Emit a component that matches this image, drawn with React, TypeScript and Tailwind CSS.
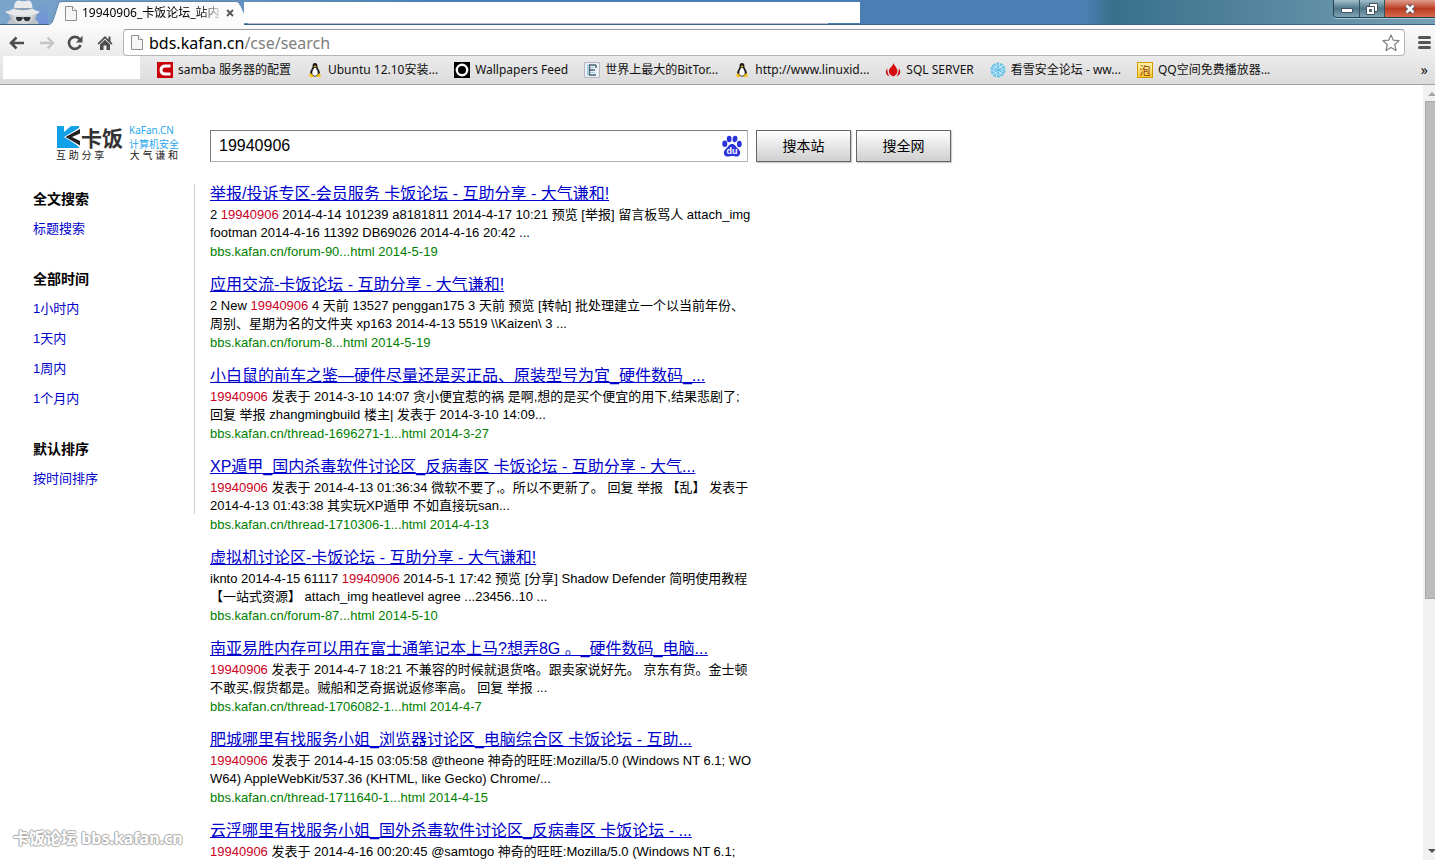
import React, { useState } from 'react';

const KEYWORD = '19940906';

const results = [
  {
    title: '举报/投诉专区-会员服务 卡饭论坛 - 互助分享 - 大气谦和!',
    lines: [
      '2 19940906 2014-4-14 101239 a8181811 2014-4-17 10:21 预览 [举报] 留言板骂人 attach_img',
      'footman 2014-4-16 11392 DB69026 2014-4-16 20:42 ...',
    ],
    url: 'bbs.kafan.cn/forum-90...html 2014-5-19',
  },
  {
    title: '应用交流-卡饭论坛 - 互助分享 - 大气谦和!',
    lines: [
      '2 New 19940906 4 天前 13527 penggan175 3 天前 预览 [转帖] 批处理建立一个以当前年份、',
      '周别、星期为名的文件夹 xp163 2014-4-13 5519 \\\\Kaizen\\ 3 ...',
    ],
    url: 'bbs.kafan.cn/forum-8...html 2014-5-19',
  },
  {
    title: '小白鼠的前车之鉴—硬件尽量还是买正品、原装型号为宜_硬件数码_...',
    lines: [
      '19940906 发表于 2014-3-10 14:07 贪小便宜惹的祸 是啊,想的是买个便宜的用下,结果悲剧了;',
      '回复 举报 zhangmingbuild 楼主| 发表于 2014-3-10 14:09...',
    ],
    url: 'bbs.kafan.cn/thread-1696271-1...html 2014-3-27',
  },
  {
    title: 'XP遁甲_国内杀毒软件讨论区_反病毒区 卡饭论坛 - 互助分享 - 大气...',
    lines: [
      '19940906 发表于 2014-4-13 01:36:34 微软不要了,。所以不更新了。 回复 举报 【乱】 发表于',
      '2014-4-13 01:43:38 其实玩XP遁甲 不如直接玩san...',
    ],
    url: 'bbs.kafan.cn/thread-1710306-1...html 2014-4-13',
  },
  {
    title: '虚拟机讨论区-卡饭论坛 - 互助分享 - 大气谦和!',
    lines: [
      'iknto 2014-4-15 61117 19940906 2014-5-1 17:42 预览 [分享] Shadow Defender 简明使用教程',
      '【一站式资源】 attach_img heatlevel agree ...23456..10 ...',
    ],
    url: 'bbs.kafan.cn/forum-87...html 2014-5-10',
  },
  {
    title: '南亚易胜内存可以用在富士通笔记本上马?想弄8G 。_硬件数码_电脑...',
    lines: [
      '19940906 发表于 2014-4-7 18:21 不兼容的时候就退货咯。跟卖家说好先。 京东有货。金士顿',
      '不敢买,假货都是。贼船和芝奇据说返修率高。 回复 举报 ...',
    ],
    url: 'bbs.kafan.cn/thread-1706082-1...html 2014-4-7',
  },
  {
    title: '肥城哪里有找服务小姐_浏览器讨论区_电脑综合区 卡饭论坛 - 互助...',
    lines: [
      '19940906 发表于 2014-4-15 03:05:58 @theone 神奇的旺旺:Mozilla/5.0 (Windows NT 6.1; WO',
      'W64) AppleWebKit/537.36 (KHTML, like Gecko) Chrome/...',
    ],
    url: 'bbs.kafan.cn/thread-1711640-1...html 2014-4-15',
  },
  {
    title: '云浮哪里有找服务小姐_国外杀毒软件讨论区_反病毒区 卡饭论坛 - ...',
    lines: ['19940906 发表于 2014-4-16 00:20:45 @samtogo 神奇的旺旺:Mozilla/5.0 (Windows NT 6.1;'],
    url: '',
  },
];

const filters = [
  { current: '全文搜索', options: ['标题搜索'] },
  { current: '全部时间', options: ['1小时内', '1天内', '1周内', '1个月内'] },
  { current: '默认排序', options: ['按时间排序'] },
];

function PageIcon() {
  return (
    <svg viewBox="0 0 12 15" className="h-[15px] w-3 shrink-0" aria-hidden="true">
      <path d="M.5.5h7l4 4v10H.5z" fill="#f6f6f6" stroke="#8e8e8e" />
      <path d="M7.5.5v4h4" fill="#fff" stroke="#8e8e8e" />
    </svg>
  );
}

function TuxIcon() {
  return (
    <svg viewBox="0 0 16 16" className="size-4 shrink-0" aria-hidden="true">
      <path d="M8 1C6 1 5.4 2.4 5.6 4.4 5.6 6 3.4 8 3 11c0 2 2 3.600 5 3.600s5-1.600 5-3.600c-.4-3-2.600-5-2.600-6.600C10.600 2.400 10 1 8 1z" fill="#1c1c1c" />
      <path d="M8 5.500C6.500 6.500 5.200 9 5.200 11c0 1.800 1.200 2.700 2.800 2.700s2.800-.9 2.800-2.700c0-2-1.300-4.500-2.800-5.500z" fill="#fff" />
      <path d="M6.500 4.200 8 3.600l1.500.6L8 5.600z" fill="#f0b400" />
      <path d="M3.600 11 1.800 13.800l3 1.700 2-1.300zM12.400 11l1.800 2.800-3 1.700-2-1.300z" fill="#f5c211" />
    </svg>
  );
}

const bookmarks = [
  {
    label: 'samba 服务器的配置',
    icon: (
      <svg viewBox="0 0 16 16" className="size-4 shrink-0" aria-hidden="true">
        <path d="M0 0h16v16H0z" fill="#c8000a" />
        <path d="M13.500 4H8.500Q4 4 4 8t4.500 4h5" fill="none" stroke="#fff" strokeWidth="3" />
      </svg>
    ),
  },
  { label: 'Ubuntu 12.10安装...', icon: <TuxIcon /> },
  {
    label: 'Wallpapers Feed',
    icon: (
      <svg viewBox="0 0 16 16" className="size-4 shrink-0" aria-hidden="true">
        <path d="M0 0h16v16H0z" fill="#000" />
        <circle cx="8" cy="8" r="5.200" fill="none" stroke="#fff" strokeWidth="2.400" />
      </svg>
    ),
  },
  {
    label: '世界上最大的BitTor...',
    icon: (
      <svg viewBox="0 0 16 16" className="size-4 shrink-0" aria-hidden="true">
        <path d="M.5.5h15v15H.5z" fill="#eef0f5" stroke="#b4b6c4" />
        <path d="M12 3H5.500v10H12M12 3v3M5.500 8H11" fill="none" stroke="#4c6272" strokeWidth="1.500" />
        <path d="M3.500 2.500v11" stroke="#8fd0f2" />
        <path d="M7 5.500h3M7 10.500h4" stroke="#8fd0f2" />
      </svg>
    ),
  },
  { label: 'http://www.linuxid...', icon: <TuxIcon /> },
  {
    label: 'SQL SERVER',
    icon: (
      <svg viewBox="0 0 16 16" className="size-4 shrink-0" aria-hidden="true">
        <path d="M8.500 1c.6 2.600 4 4.800 4 8.300 0 2.600-2 4.200-4.200 5.200C6 13.500 3.800 12 3.800 9.300 3.800 6 8 4.500 8.500 1z" fill="#d40f12" />
        <path d="M2.300 6.500C.2 9 0 12.500 4.500 14.300 2.800 12 2.300 9.500 2.300 6.500zM13.800 6.500c2.200 2.500 2.400 6-2.100 7.800 1.600-2.300 2.100-4.800 2.100-7.800z" fill="#c40d10" />
      </svg>
    ),
  },
  {
    label: '看雪安全论坛 - ww...',
    icon: (
      <svg viewBox="0 0 16 16" className="size-4 shrink-0" aria-hidden="true">
        <circle cx="8" cy="8" r="6.500" fill="#c9ebf8" stroke="#6cc4e8" strokeWidth="2" strokeDasharray="3 1" />
        <path d="M8 1v14M2 4.500l12 7M14 4.500l-12 7M5 3l3 2.500L11 3M5 13l3-2.500 3 2.500M2 8h12" fill="none" stroke="#5ab9e2" />
      </svg>
    ),
  },
  {
    label: 'QQ空间免费播放器...',
    icon: (
      <span className="flex size-4 shrink-0 items-center justify-center border border-[#d29a00] bg-linear-to-b from-[#fff3a8] to-[#ffc82e] text-[11px] leading-none text-[#8a3d00]">
        泡
      </span>
    ),
  },
];

function Incognito() {
  return (
    <svg viewBox="0 0 40 24" className="h-6 w-10 shrink-0" aria-hidden="true">
      <path d="M4 24c1-2.500 2.500-4 4-5l-2-4 5-3h18l5 3-2 4c1.500 1 3 2.500 4 5z" fill="#bcc1c7" />
      <path d="M9 12h22l-1 6c-1 4-5 6-10 6s-9-2-10-6z" fill="#d2d5d8" />
      <path d="M11 8c0-4.500 2-7.500 4.500-7.500 1.500 0 2.500.8 5 .8S24 .5 25.500.5C28 .5 29.500 4 29.500 8z" fill="#e8eaec" />
      <path d="M11 7.500c5 2 14 2 18.500 0l.5 3H10.500z" fill="#9a9fa4" />
      <path d="M2 11.500c3 0 6.500-2 9-3 3 2.200 15 2.200 18 0 2.500 1 5.500 3 8 3-2 3-9 4.300-17 4.300S4 14.500 2 11.500z" fill="#e6e8ea" />
      <path d="M13 17h6l1 .8 1-.8h6.500c0 3-1.400 4.300-3.300 4.300-2 0-3.200-1-3.600-2.800h-1.200c-.4 1.800-1.500 2.800-3.400 2.800-1.900 0-3-1.300-3-4.300z" fill="#2d3236" />
    </svg>
  );
}

function TabStrip() {
  return (
    <header className="relative flex h-[25px] items-end border-b border-[#3b6285] bg-linear-to-r from-[#7ba5cc] via-[#4b7fb3] via-30% to-[#4b7fb3]">
      <div className="absolute inset-y-0 right-0 w-[350px] bg-linear-to-r from-[#4b7fb3] via-[#37708a] via-8% to-[#76a0b4]" />
      <div className="relative flex w-12 bg-linear-to-br from-transparent from-50% to-[#6f8fdc] pl-[3px]">
        <Incognito />
      </div>
      <div className="relative -mb-px flex h-6 w-[196px] shrink-0 items-center">
        <svg viewBox="0 0 196 24" preserveAspectRatio="none" className="absolute inset-0 size-full" aria-hidden="true">
          <path d="M0 24C4 23 5 20 6.500 15L10 4c1-3 2-3.500 5-3.500h172c3 0 4 .5 5 3.500l4 9v11z" fill="#fbfbfb" />
          <path d="M0 24C4 23 5 20 6.500 15L10 4c1-3 2-3.500 5-3.500h172c3 0 4 .5 5 3.500" fill="none" stroke="#5f84a8" />
        </svg>
        <div className="relative flex w-full items-center pl-[17px] pr-2">
          <PageIcon />
          <span className="ml-[5px] w-[139px] overflow-hidden bg-linear-to-r from-black from-85% to-black/20 bg-clip-text text-xs whitespace-nowrap text-transparent">
            19940906_卡饭论坛_站内
          </span>
          <button type="button" aria-label="关闭标签页" className="ml-1 flex size-3 items-center justify-center">
            <svg viewBox="0 0 8 8" className="size-2" aria-hidden="true">
              <path d="M1 1l6 6M7 1l-6 6" stroke="#555" strokeWidth="1.800" />
            </svg>
          </button>
        </div>
      </div>
      <div className="relative mr-4 h-6 w-[616px] shrink-0 pt-0.5">
        <div className="h-[21px] bg-white" />
        <div className="ml-1 h-px w-[580px] bg-[#b6bdd0]" />
      </div>
      <div className="absolute top-0 right-0 flex h-[18px] w-[102px] overflow-hidden rounded-bl border-b border-l border-[#24414f] shadow-[0_1px_0_#a9c6d2]">
        <button type="button" aria-label="最小化" className="flex w-[26px] items-center justify-center border-r border-[#35535f] bg-linear-to-b from-[#a3bfcb] via-[#4e7789] via-50% to-[#7fa6b5]">
          <svg viewBox="0 0 12 6" className="mt-1 h-1.5 w-3" aria-hidden="true">
            <path d="M.5.5h11v4H.5z" fill="#fff" stroke="#44525f" />
          </svg>
        </button>
        <button type="button" aria-label="还原" className="flex w-[25px] items-center justify-center border-r border-[#35535f] bg-linear-to-b from-[#a3bfcb] via-[#4e7789] via-50% to-[#7fa6b5]">
          <svg viewBox="0 0 12 12" className="size-3" aria-hidden="true">
            <path d="M3.500.5h8v8h-8z" fill="#fff" stroke="#44525f" />
            <path d="M.5 3.500h8v8h-8z" fill="#fff" stroke="#44525f" />
            <path d="M3.500 6.500h2v2h-2z" fill="#6a8a99" stroke="#44525f" />
          </svg>
        </button>
        <button type="button" aria-label="关闭" className="flex flex-1 items-center justify-center bg-linear-to-b from-[#dd9c8c] via-[#bb3a20] via-50% to-[#d5694c]">
          <svg viewBox="0 0 12 10" className="h-2.5 w-3" aria-hidden="true">
            <path d="M2.500 1.500l7 7M9.500 1.500l-7 7" stroke="#44465a" strokeWidth="4.400" />
            <path d="M2.500 1.500l7 7M9.500 1.500l-7 7" stroke="#fff" strokeWidth="2.600" />
          </svg>
        </button>
      </div>
    </header>
  );
}

function Toolbar() {
  const [address, setAddress] = useState('');
  return (
    <div className="flex h-[31px] items-center pt-1 pl-[9px]">
      <button type="button" aria-label="后退" className="flex w-[30px] items-center">
        <svg viewBox="0 0 16 14" className="h-3.5 w-4" aria-hidden="true">
          <path d="M15 7H2.500M7.500 1.500 2 7l5.500 5.500" fill="none" stroke="#4d4d4d" strokeWidth="2.600" />
        </svg>
      </button>
      <button type="button" aria-label="前进" className="flex w-7 items-center">
        <svg viewBox="0 0 16 14" className="h-3.5 w-4" aria-hidden="true">
          <path d="M1 7h12.500M8.500 1.500 14 7l-5.500 5.500" fill="none" stroke="#c4c4c4" strokeWidth="2.400" />
        </svg>
      </button>
      <button type="button" aria-label="重新加载" className="flex w-[30px] items-center">
        <svg viewBox="0 0 16 16" className="size-4" aria-hidden="true">
          <path d="M12.700 4.200A6 6 0 1 0 13.600 10" fill="none" stroke="#4d4d4d" strokeWidth="2.600" />
          <path d="M15.500.8V7.500H8.800z" fill="#4d4d4d" />
        </svg>
      </button>
      <button type="button" aria-label="主页" className="flex w-[26px] items-center">
        <svg viewBox="0 0 16 16" className="size-4" aria-hidden="true">
          <path d="M8 1 .5 8.500l1.200 1.200L8 3.600l6.300 6.100 1.200-1.200L13.500 6.500V1.500h-2v3z" fill="#4d4d4d" />
          <path d="M3 9.500 8 4.800l5 4.700V15H9.500v-4.500h-3V15H3z" fill="#4d4d4d" />
        </svg>
      </button>
      <div className="flex h-[27px] flex-1 items-center rounded-sm border border-[#b5b5b5] border-t-[#999] bg-white pr-1 pl-[7px]">
        <PageIcon />
        <label className="relative ml-1.5 flex-1 text-base leading-6">
          <span className={address ? 'invisible' : 'text-black'}>
            bds.kafan.cn<span className="text-[#808080]">/cse/search</span>
          </span>
          <input
            aria-label="地址栏"
            value={address}
            onChange={(e) => setAddress(e.target.value)}
            className="absolute inset-0 w-full bg-transparent outline-none"
          />
        </label>
        <button type="button" aria-label="为此网页添加书签">
          <svg viewBox="0 0 18 18" className="size-[18px]" aria-hidden="true">
            <path d="M9 1l2.300 5.200 5.700.5-4.300 3.800 1.300 5.900L9 13.500l-5 2.900 1.300-5.900L1 6.700l5.700-.5z" fill="#fff" stroke="#808080" strokeWidth="1.200" strokeLinejoin="round" />
          </svg>
        </button>
      </div>
      <button type="button" aria-label="菜单" className="ml-3 flex w-[18px] flex-col gap-0.5">
        <span className="ml-px h-[3px] w-[13px] rounded-full bg-[#555]" />
        <span className="ml-px h-[3px] w-[13px] rounded-full bg-[#555]" />
        <span className="ml-px h-[3px] w-[13px] rounded-full bg-[#555]" />
      </button>
    </div>
  );
}

function BookmarkBar() {
  return (
    <nav aria-label="书签" className="flex h-7 items-start pl-[3px] text-xs text-[#111]">
      <div className="h-[23px] w-[137px] shrink-0 bg-white" />
      <ul className="ml-[17px] flex h-7 items-center gap-4">
        {bookmarks.map((bookmark) => (
          <li key={bookmark.label}>
            <a href="#" className="flex items-center gap-[5px] whitespace-nowrap">
              {bookmark.icon}
              {bookmark.label}
            </a>
          </li>
        ))}
      </ul>
      <button type="button" aria-label="更多书签" className="mt-1.5 mr-[7px] ml-auto text-sm leading-4">
        »
      </button>
    </nav>
  );
}

function Logo() {
  return (
    <a href="#" aria-label="卡饭" className="ml-14 block w-[154px] shrink-0 font-['Noto_Sans_CJK_SC',sans-serif]">
      <span className="flex items-center">
        <svg viewBox="0 0 24 22" className="h-[22px] w-6 shrink-0" aria-hidden="true">
          <path d="M1 0h22v2L10 11l13 10v1H1z" fill="#12a0e8" />
          <path d="M8 0h7L8 6z" fill="#fff" />
          <path d="M24 1.500 8 11l16 9.500z" fill="#fff" />
          <path d="M24 3v4.500L16 11l8 4v4.500L9.500 11z" fill="#222" />
        </svg>
        <span className="ml-px text-[21px] leading-6 font-bold text-[#333]">卡饭</span>
        <span className="ml-1.5 flex flex-col text-[10px] leading-[13px] whitespace-nowrap text-[#2aa6ea]">
          <span className="font-['Noto_Sans',sans-serif]">KaFan.CN</span>
          <span>计算机安全</span>
        </span>
      </span>
      <span className="flex w-[122px] justify-between font-['Liberation_Sans','Noto_Sans_CJK_SC',sans-serif] text-[10px] leading-3 text-[#222]">
        <span>互 助 分 享</span>
        <span>大 气 谦 和</span>
      </span>
    </a>
  );
}

function BaiduPaw() {
  return (
    <svg viewBox="0 0 20 22" className="h-[22px] w-5 shrink-0" aria-hidden="true">
      <g fill="#2a32dc">
        <ellipse cx="2.800" cy="8.800" rx="2.500" ry="3.200" />
        <ellipse cx="7.200" cy="4" rx="2.400" ry="3.300" />
        <ellipse cx="13" cy="4" rx="2.400" ry="3.300" transform="rotate(8 13 4)" />
        <ellipse cx="17.300" cy="9" rx="2.400" ry="3.200" />
        <path d="M10 9c3 0 3.800 2.600 5.500 4.300 1.800 1.600 3 3 2.600 5.200-.5 2.800-2.800 3.200-4.600 3-1.500-.2-2.200-.4-3.500-.4s-2 .2-3.500.4c-1.800.2-4.100-.2-4.600-3-.4-2.200.8-3.600 2.600-5.200C6.200 11.600 7 9 10 9z" />
      </g>
      <text x="10" y="19" textAnchor="middle" fill="#fff" fontSize="9" fontWeight="bold" fontFamily="Liberation Sans, sans-serif">
        du
      </text>
    </svg>
  );
}

function SearchForm() {
  const [query, setQuery] = useState(KEYWORD);
  const buttonClass =
    'h-8 w-[95px] border border-[#666] bg-linear-to-b from-white to-[#cfcfcf] text-sm text-black shadow-[1px_1px_1px_#ccc]';
  return (
    <form className="flex items-center" onSubmit={(e) => e.preventDefault()}>
      <div className="flex h-8 w-[538px] items-center border border-[#b6b6b6] border-t-[#7b7b7b] border-l-[#7b7b7b] bg-white pr-[5px] pl-2">
        <input
          type="text"
          aria-label="搜索"
          value={query}
          onChange={(e) => setQuery(e.target.value)}
          className="min-w-0 flex-1 text-base outline-none"
        />
        <BaiduPaw />
      </div>
      <button type="submit" className={`ml-2 ${buttonClass}`}>
        搜本站
      </button>
      <button type="button" className={`ml-[5px] ${buttonClass}`}>
        搜全网
      </button>
    </form>
  );
}

function Sidebar() {
  return (
    <aside className="mt-0.5 ml-[33px] w-[162px] shrink-0 self-start border-r border-[#ccc] leading-[30px]">
      {filters.map((group) => (
        <div key={group.current} className="pb-5">
          <h2 className="text-sm leading-[30px] font-bold text-black">{group.current}</h2>
          <ul className="text-[13px] leading-[30px]">
            {group.options.map((option) => (
              <li key={option}>
                <a href="#" className="text-[#0000cc]">
                  {option}
                </a>
              </li>
            ))}
          </ul>
        </div>
      ))}
    </aside>
  );
}

function Highlight({ text }: { text: string }) {
  return (
    <>
      {text.split(KEYWORD).map((part, i) => (
        <React.Fragment key={i}>
          {i > 0 && <em className="text-[#cc0022] not-italic">{KEYWORD}</em>}
          {part}
        </React.Fragment>
      ))}
    </>
  );
}

function Results() {
  return (
    <ol className="ml-[15px] flex flex-col gap-[11px] whitespace-nowrap">
      {results.map((result) => (
        <li key={result.title}>
          <h3 className="text-base leading-6">
            <a href="#" className="text-[#0000cc] underline underline-offset-1">
              {result.title}
            </a>
          </h3>
          <p className="text-[13px] leading-[18px] text-black">
            {result.lines.map((line) => (
              <span key={line} className="block">
                <Highlight text={line} />
              </span>
            ))}
          </p>
          <p className="text-[13px] leading-5 text-[#008000]">{result.url}</p>
        </li>
      ))}
    </ol>
  );
}

function ScrollBar() {
  return (
    <div className="flex w-3 shrink-0 flex-col overflow-hidden bg-[#f1f1f1]" aria-hidden="true">
      <svg viewBox="0 0 12 16" className="h-4 w-3 shrink-0">
        <path d="M5 11l4-4 4 4z" fill="#a3a3a3" />
      </svg>
      <div className="flex min-h-0 flex-1 flex-col">
        <div className="ml-0.5 h-[67%] border border-r-0 border-[#a8a8a8] bg-[#bcbcbc]" />
      </div>
      <svg viewBox="0 0 12 16" className="h-4 w-3 shrink-0">
        <path d="M5 5h8L9 9z" fill="#505050" />
      </svg>
    </div>
  );
}

export default function App() {
  return (
    <div className="relative flex h-screen flex-col overflow-hidden bg-white font-['Liberation_Sans','Noto_Sans_CJK_SC',sans-serif]">
      <div className="shrink-0 font-['Noto_Sans','Noto_Sans_CJK_SC',sans-serif]">
        <TabStrip />
        <div className="border-b border-[#a3a3a3] bg-linear-to-b from-[#fbfbfb] to-[#dcdcdc]">
          <Toolbar />
          <BookmarkBar />
        </div>
      </div>
      <div className="flex min-h-0 flex-1">
        <main className="min-w-0 flex-1 overflow-hidden">
          <div className="flex items-start pt-[39px]">
            <Logo />
            <div className="pt-1.5">
              <SearchForm />
            </div>
          </div>
          <div className="flex pt-5">
            <Sidebar />
            <Results />
          </div>
        </main>
        <ScrollBar />
      </div>
      <div className="absolute bottom-2.5 left-[13px] font-['Noto_Sans','Noto_Sans_CJK_SC',sans-serif] text-base leading-6 font-bold text-white [text-shadow:1px_0_1px_#aaa,-1px_0_1px_#aaa,0_1px_1px_#aaa,0_-1px_1px_#aaa]">
        卡饭论坛 bbs.kafan.cn
      </div>
    </div>
  );
}
